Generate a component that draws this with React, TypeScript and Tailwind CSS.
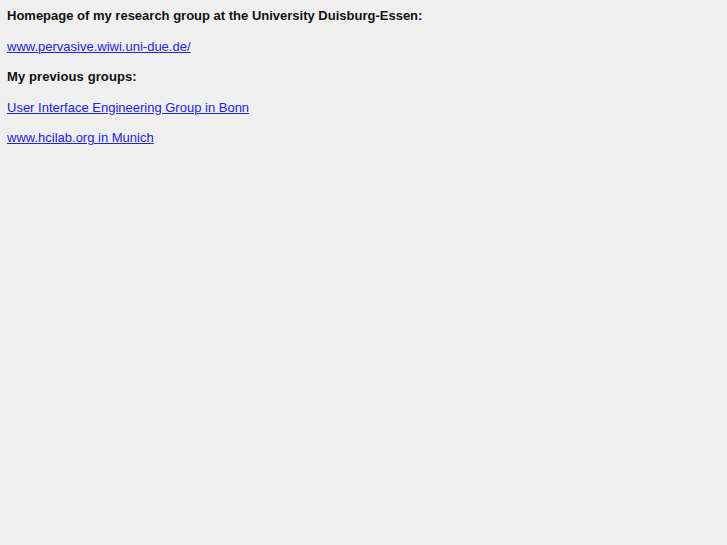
export default function App() {
  const links = [
    { text: 'www.pervasive.wiwi.uni-due.de/', href: '#' },
  ];

  return (
    <div className="min-h-[545px] w-full bg-[#efefef] font-['Liberation_Sans',Arial,sans-serif] text-[13px] text-[#111]">
      <div className="flex flex-col px-[7px] pt-[0.5px]">
        {/* Current group */}
        <div className="flex h-[30.5px] items-center font-bold">
          Homepage of my research group at the University Duisburg-Essen:
        </div>
        {links.map((l) => (
          <div key={l.text} className="flex h-[30.5px] items-center">
            <a href={l.href} className="text-[#2222ee] underline">
              {l.text}
            </a>
          </div>
        ))}

        {/* Previous groups */}
        <div className="flex h-[30.5px] items-center font-bold tracking-[0.1px]">My previous groups:</div>
        <div className="flex h-[30.5px] items-center">
          <a href="#" className="text-[#2222ee] underline">
            User Interface Engineering Group in Bonn
          </a>
        </div>
        <div className="flex h-[30.5px] items-center">
          <a href="#" className="text-[#2222ee] underline">
            www.hcilab.org in Munich
          </a>
        </div>
      </div>
    </div>
  );
}
